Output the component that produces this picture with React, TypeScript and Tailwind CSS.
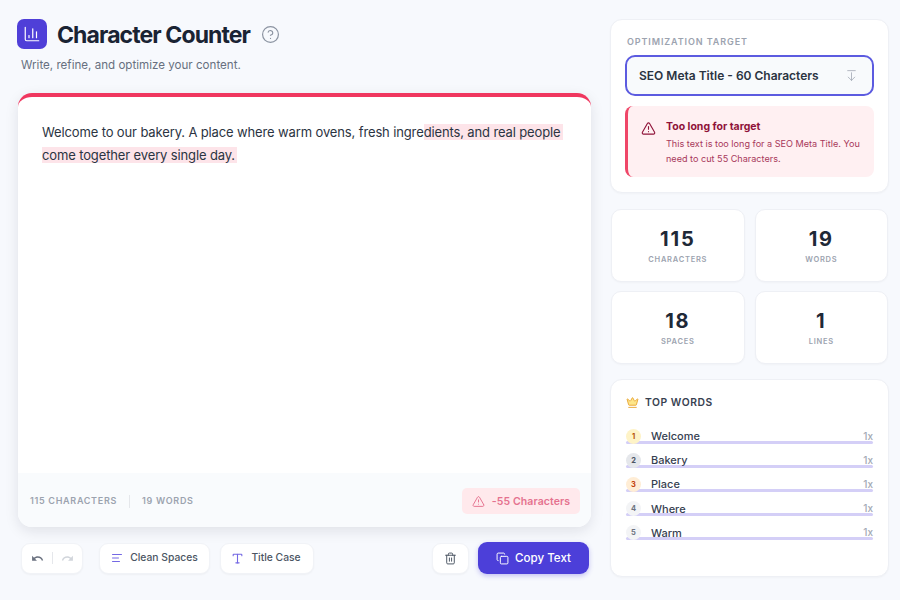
import { AlignLeft, ArrowDownFromLine, ChartColumn, CircleHelp, Copy, Crown, Trash2, TriangleAlert, Type } from 'lucide-react';
import { MdRedo, MdUndo } from 'react-icons/md';

const stats = [
  { value: '115', label: 'Characters' },
  { value: '19', label: 'Words' },
  { value: '18', label: 'Spaces' },
  { value: '1', label: 'Lines' },
];

const topWords = [
  { word: 'Welcome', badge: 'bg-[#fef3c7] text-[#b45309]' },
  { word: 'Bakery', badge: 'bg-[#e5e7eb] text-[#4b5563]' },
  { word: 'Place', badge: 'bg-[#ffedd5] text-[#c2410c]' },
  { word: 'Where', badge: 'bg-[#f3f4f6] text-[#6b7280]' },
  { word: 'Warm', badge: 'bg-[#f3f4f6] text-[#6b7280]' },
];

const toolBtn =
  'flex h-[31px] items-center rounded-[9px] border border-[#f1f3f7] bg-white shadow-[0_1px_2px_rgba(0,0,0,0.04)]';

export default function App() {
  return (
    <div className="flex h-[600px] w-[900px] overflow-hidden bg-[#f7f9fd] pl-[18px] font-['Inter',sans-serif] text-[#1f2937]">
      <main className="flex w-[573px] flex-col">
        <header className="pt-[19px]">
          <div className="flex items-center">
            <div className="-ml-px flex size-[30px] items-center justify-center rounded-[7px] bg-[#4f3fd8] text-white">
              <ChartColumn size={18} strokeWidth={1.6} />
            </div>
            <h1 className="ml-[10px] translate-y-px text-[23px] leading-[30px] font-bold tracking-[-0.9px] text-[#1a2333]">Character Counter</h1>
            <CircleHelp size={19} strokeWidth={1.5} className="ml-[11px] text-[#8b93a1]" />
          </div>
          <p className="mt-[7px] ml-[3px] text-[11.6px] leading-[18px] text-[#677080]">Write, refine, and optimize your content.</p>
        </header>

        <section className="mt-[19px] flex h-[434px] flex-col overflow-hidden rounded-[14px] border-t-[4px] border-[#f0375f] bg-white shadow-[0_4px_14px_rgba(15,23,42,0.10)]">
          <div className="flex-1 px-[24px] pt-[24px] text-[13px] leading-[23px] tracking-[-0.13px] text-[#2b3442]">
            Welcome to our bakery. A place where warm ovens, fresh ingre
            <span className="bg-[#fde4e9] pr-[2px] [box-decoration-break:clone]">dients, and real people come together every single day.</span>
          </div>
          <div className="flex h-[54px] items-center justify-between bg-[#f9fbfd] pr-[11px] pl-[12px] text-[9px] font-semibold tracking-[0.7px] text-[#9ca3af]">
            <div className="flex translate-y-px items-center">
              <span>115 CHARACTERS</span>
              <span className="mx-[12px] h-[13px] w-px bg-[#e5e7eb]" />
              <span>19 WORDS</span>
            </div>
            <div className="flex h-[26px] w-[118px] translate-y-px items-center justify-center gap-[7px] rounded-[5px] bg-[#ffe9ec] text-[10.5px] tracking-[0.1px] text-[#e5728f]">
              <TriangleAlert size={13} strokeWidth={1.8} />
              <span className="translate-y-px">-55 Characters</span>
            </div>
          </div>
        </section>

        <div className="mt-[15px] flex items-center pr-[2px] pl-[3px] text-[10.3px] font-medium text-[#4b5563]">
          <div className={`${toolBtn} w-[62px] justify-center gap-[8px]`}>
            <MdUndo size={13} className="text-[#6b7280]" />
            <span className="h-[12px] w-px bg-[#e5e7eb]" />
            <MdRedo size={13} className="text-[#d1d5db]" />
          </div>
          <button className={`${toolBtn} ml-[16px] w-[111px] justify-center gap-[7px]`}>
            <AlignLeft size={12} strokeWidth={2} className="text-[#7468e4]" />
            Clean Spaces
          </button>
          <button className={`${toolBtn} ml-[10px] w-[94px] justify-center gap-[7px]`}>
            <Type size={13} strokeWidth={2} className="-ml-[2px] text-[#7468e4]" />
            Title Case
          </button>
          <button className={`${toolBtn} ml-auto w-[37px] justify-center`}>
            <Trash2 size={13} strokeWidth={1.8} className="text-[#4b5563]" />
          </button>
          <button className="ml-[9px] flex h-[32px] w-[111px] items-center justify-center gap-[6px] rounded-[9px] bg-[#4c3fd9] pt-px text-[11.6px] text-white shadow-[0_2px_5px_rgba(76,63,217,0.3)]">
            <Copy size={13} strokeWidth={1.8} />
            Copy Text
          </button>
        </div>
      </main>

      <aside className="ml-[19px] flex w-[279px] flex-col pt-[19px]">
        <section className="h-[174px] rounded-[12px] border border-[#eef0f5] bg-white px-[14px] pt-[16px] shadow-[0_1px_2px_rgba(0,0,0,0.03)]">
          <div className="ml-[2px] text-[9px] leading-[12px] font-semibold tracking-[0.9px] text-[#9ca3af]">OPTIMIZATION TARGET</div>
          <div className="mt-[7px] flex h-[41px] items-center justify-between rounded-[10px] border-2 border-[#5c5be0] bg-[#f8fafc] pr-[14px] pl-[12px] text-[12px] font-semibold text-[#2b3442]">
            SEO Meta Title - 60 Characters
            <ArrowDownFromLine size={13} strokeWidth={1.4} className="text-[#9ca3af]" />
          </div>
          <div className="mt-[10px] flex h-[71px] rounded-[8px] border-l-[3px] border-[#ef4668] bg-[#fff0f2] pt-[14px] pl-[13px] text-[#8f1239]">
            <TriangleAlert size={15} strokeWidth={1.8} className="mt-px shrink-0" />
            <div className="ml-[10px]">
              <div className="text-[10.5px] leading-[14px] font-bold">Too long for target</div>
              <p className="mt-[2px] w-[196px] text-[9.1px] leading-[15px] text-[#a8385b]">This text is too long for a SEO Meta Title. You need to cut 55 Characters.</p>
            </div>
          </div>
        </section>

        <div className="mt-[16px] grid grid-cols-2 gap-x-[10px] gap-y-[9px] pr-px pl-px">
          {stats.map((s) => (
            <div key={s.label} className="flex h-[73px] flex-col items-center rounded-[10px] border border-[#eef0f5] bg-white pt-[17px] shadow-[0_1px_2px_rgba(0,0,0,0.03)]">
              <div className="text-[20px] leading-[24px] font-bold tracking-[1.8px] text-[#1f2937]">{s.value}</div>
              <div className="mt-[4px] text-[7.5px] leading-[10px] font-semibold tracking-[0.75px] text-[#9ca3af] uppercase">{s.label}</div>
            </div>
          ))}
        </div>

        <section className="mt-[15px] h-[198px] rounded-[12px] border border-[#eef0f5] bg-white px-[15px] pt-[15px] shadow-[0_1px_2px_rgba(0,0,0,0.03)]">
          <div className="flex items-center gap-[6px] text-[10.3px] leading-[14px] font-semibold tracking-[0.55px] text-[#374151]">
            <Crown size={13} strokeWidth={1.8} fill="#fde68a" className="text-[#e9a93a]" />
            TOP WORDS
          </div>
          <ul className="mt-[20px] flex flex-col gap-[9.1px]">
            {topWords.map((t, i) => (
              <li key={t.word} className="relative flex h-[15px] items-center">
                <span className="absolute right-0 bottom-0 left-0 h-[3px] rounded-full bg-[#d4cff7]" />
                <span className={`relative flex size-[15px] items-center justify-center rounded-full text-[7.5px] font-bold ${t.badge}`}>{i + 1}</span>
                <span className="relative ml-[10px] text-[11px] font-medium text-[#374151]">{t.word}</span>
                <span className="relative ml-auto text-[10px] font-medium text-[#a3a9b5]">1x</span>
              </li>
            ))}
          </ul>
        </section>
      </aside>
    </div>
  );
}
